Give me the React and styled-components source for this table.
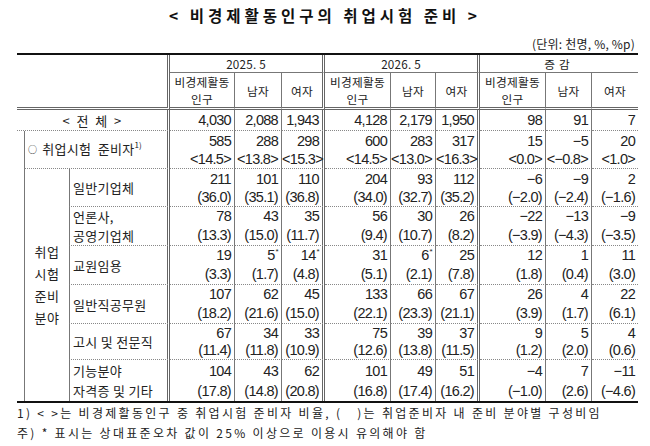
import React from 'react';
import styled, { createGlobalStyle } from 'styled-components';

const GlobalStyle = createGlobalStyle`
	body {
		margin: 0;
		background: #fff;
		color: #222;
		font-family: 'Noto Sans CJK KR', 'Noto Sans', sans-serif;
	}
`;

const Page = styled.div`
	width: 650px;
	height: 446px;
	padding-top: 5px;
	box-sizing: border-box;
	overflow: hidden;
`;

const Title = styled.h1`
	margin: 0;
	font-size: 15.5px;
	line-height: 20px;
	font-weight: 700;
	letter-spacing: 4px;
	text-align: center;
	color: #111;
`;

const Unit = styled.div`
	margin-top: 12px;
	padding-right: 15px;
	font-size: 12px;
	line-height: 14px;
	text-align: right;
	letter-spacing: 0.2px;
`;

const Table = styled.table`
	margin: 2px 0 0 17px;
	width: 621px;
	table-layout: fixed;
	border-collapse: separate;
	border-spacing: 0;
	border-top: 2px solid #111;
	border-bottom: 2px solid #111;
`;

const lineFor = (kind) => {
	if (kind === 'dbl') return '3px double #666';
	if (kind === 'solid') return '1px solid #777';
	if (kind === 'dot') return '1px dotted #888';
	return 'none';
};

const Th = styled.th`
	padding: 0;
	font-weight: 400;
	font-size: 11.7px;
	line-height: 17px;
	letter-spacing: ${(p) => p.$spread || '0.2px'};
	text-align: center;
	vertical-align: middle;
	white-space: nowrap;
	overflow: hidden;
	border-right: ${(p) => lineFor(p.$r)};
	border-bottom: ${(p) => lineFor(p.$b)};
`;

const Td = styled.td`
	padding: 0;
	vertical-align: middle;
	border-right: ${(p) => lineFor(p.$r)};
	border-bottom: ${(p) => lineFor(p.$b)};
	border-left: ${(p) => lineFor(p.$l)};
`;

const Label = styled(Td)`
	font-size: 13px;
	line-height: ${(p) => p.$lh || 18}px;
	letter-spacing: 0.3px;
	text-align: ${(p) => (p.$center ? 'center' : 'left')};
	padding-left: ${(p) => (p.$center ? 0 : 3)}px;
	white-space: nowrap;
`;

const Bullet = styled.span`
	font-size: 9px;
	margin-right: 5px;
	vertical-align: 1px;
`;

const Group = styled(Td)`
	font-size: 13px;
	line-height: 22px;
	text-align: center;
	letter-spacing: 0.5px;
`;

const Num = styled(Td)`
	font-family: 'Liberation Sans', 'Noto Sans CJK KR', sans-serif;
	font-size: 14.5px;
	line-height: ${(p) => p.$lh || 18}px;
	letter-spacing: -0.7px;
	text-align: right;
	padding-right: 3px;
	white-space: nowrap;
	color: #222;
`;

const Line = styled.div`
	display: block;
`;

const Star = styled.sup`
	font-size: 8px;
	line-height: 0;
	vertical-align: 6px;
	margin-left: 1px;
`;

const Note = styled.sup`
	font-size: 8px;
	line-height: 0;
	vertical-align: 6px;
	letter-spacing: 0;
`;

const Row = styled.tr`
	height: ${(p) => p.$h}px;
`;

const Footer = styled.div`
	margin-left: 17px;
	font-size: 12px;
	letter-spacing: 2.3px;
	white-space: nowrap;
`;

const FootLine = styled.div`
	height: 20px;
	line-height: 20px;
`;

const widths = [7, 45, 101, 65, 47, 43, 66, 45, 44, 66, 46, 46];

const total = [
	['4,030', '2,088', '1,943'],
	['4,128', '2,179', '1,950'],
	['98', '91', '7'],
];

const ready = ['585', '288', '298', '600', '283', '317', '15', '−5', '20'];
const readyRate = ['<14.5>', '<13.8>', '<15.3>', '<14.5>', '<13.0>', '<16.3>', '<0.0>', '<−0.8>', '<1.0>'];

const fields = [
	{
		name: ['일반기업체'],
		h: 38,
		lh: 18,
		v: ['211', '101', '110', '204', '93', '112', '−6', '−9', '2'],
		p: ['36.0', '35.1', '36.8', '34.0', '32.7', '35.2', '−2.0', '−2.4', '−1.6'],
	},
	{
		name: ['언론사,', '공영기업체'],
		h: 39,
		lh: 19,
		v: ['78', '43', '35', '56', '30', '26', '−22', '−13', '−9'],
		p: ['13.3', '15.0', '11.7', '9.4', '10.7', '8.2', '−3.9', '−4.3', '−3.5'],
	},
	{
		name: ['교원임용'],
		h: 39,
		lh: 19,
		v: ['19', '5*', '14*', '31', '6*', '25', '12', '1', '11'],
		p: ['3.3', '1.7', '4.8', '5.1', '2.1', '7.8', '1.8', '0.4', '3.0'],
	},
	{
		name: ['일반직공무원'],
		h: 39,
		lh: 19,
		v: ['107', '62', '45', '133', '66', '67', '26', '4', '22'],
		p: ['18.2', '21.6', '15.0', '22.1', '23.3', '21.1', '3.9', '1.7', '6.1'],
	},
	{
		name: ['고시 및 전문직'],
		h: 36,
		lh: 17,
		v: ['67', '34', '33', '75', '39', '37', '9', '5', '4'],
		p: ['11.4', '11.8', '10.9', '12.6', '13.8', '11.5', '1.2', '2.0', '0.6'],
	},
	{
		name: ['기능분야', '자격증 및 기타'],
		h: 41,
		lh: 20,
		last: true,
		v: ['104', '43', '62', '101', '49', '51', '−4', '7', '−11'],
		p: ['17.8', '14.8', '20.8', '16.8', '17.4', '16.2', '−1.0', '2.6', '−4.6'],
	},
];

// right border of each data column: double at the end of each period block
const colRight = (i) => (i === 2 || i === 5 ? 'dbl' : i === 8 ? 'none' : 'solid');

const Value = ({ text }) =>
	text.endsWith('*') ? (
		<>
			{text.slice(0, -1)}
			<Star>*</Star>
		</>
	) : (
		text
	);

const App = () => {
	return (
		<Page>
			<GlobalStyle />
			<Title>&lt; 비경제활동인구의 취업시험 준비 &gt;</Title>
			<Unit>(단위: 천명, %, %p)</Unit>
			<Table>
				<colgroup>
					{widths.map((w, i) => (
						<col key={i} style={{ width: w }} />
					))}
				</colgroup>
				<tbody>
					<Row $h={16}>
						<Th colSpan={3} rowSpan={2} $r='dbl' $b='dbl' />
						<Th colSpan={3} $r='dbl' $b='solid'>2025. 5</Th>
						<Th colSpan={3} $r='dbl' $b='solid'>2026. 5</Th>
						<Th colSpan={3} $b='solid' $spread='4px'>증감</Th>
					</Row>
					<Row $h={37}>
						{[0, 1, 2].map((g) => (
							<React.Fragment key={g}>
								<Th $r='solid' $b='dbl'>
									비경제활동
									<br />
									인구
								</Th>
								<Th $r='solid' $b='dbl'>남자</Th>
								<Th $r={g < 2 ? 'dbl' : 'none'} $b='dbl'>여자</Th>
							</React.Fragment>
						))}
					</Row>
					<Row $h={21}>
						<Label $center colSpan={3} $r='dbl' $b='dot' $lh={19}>
							&lt;&nbsp; 전&nbsp; 체&nbsp; &gt;
						</Label>
						{total.flat().map((t, i) => (
							<Num key={i} $r={colRight(i)} $b='dot' $lh={19}>
								{t}
							</Num>
						))}
					</Row>
					<Row $h={38}>
						<Td rowSpan={8} />
						<Label colSpan={2} $l='solid' $r='dbl' $b='dot'>
							<Bullet>○</Bullet>취업시험&nbsp; 준비자<Note>1)</Note>
						</Label>
						{ready.map((t, i) => (
							<Num key={i} $r={colRight(i)} $b='dot'>
								<Line>{t}</Line>
								<Line>{readyRate[i]}</Line>
							</Num>
						))}
					</Row>
					{fields.map((f, r) => (
						<Row key={r} $h={f.h}>
							{r === 0 && (
								<Group rowSpan={6} $l='solid'>
									취업
									<br />
									시험
									<br />
									준비
									<br />
									분야
								</Group>
							)}
							<Label $l='solid' $r='dbl' $b={f.last ? 'none' : 'dot'} $lh={f.lh}>
								{f.name.map((n) => (
									<Line key={n}>{n}</Line>
								))}
							</Label>
							{f.v.map((t, i) => (
								<Num key={i} $r={colRight(i)} $b={f.last ? 'none' : 'dot'} $lh={f.lh}>
									<Line>
										<Value text={t} />
									</Line>
									<Line>({f.p[i]})</Line>
								</Num>
							))}
						</Row>
					))}
				</tbody>
			</Table>
			<Footer>
				<FootLine>1) &lt; &gt;는 비경제활동인구 중 취업시험 준비자 비율, (&nbsp;&nbsp;&nbsp;)는 취업준비자 내 준비 분야별 구성비임</FootLine>
				<FootLine>주) * 표시는 상대표준오차 값이 25% 이상으로 이용시 유의해야 함</FootLine>
			</Footer>
		</Page>
	);
};

export default App;
